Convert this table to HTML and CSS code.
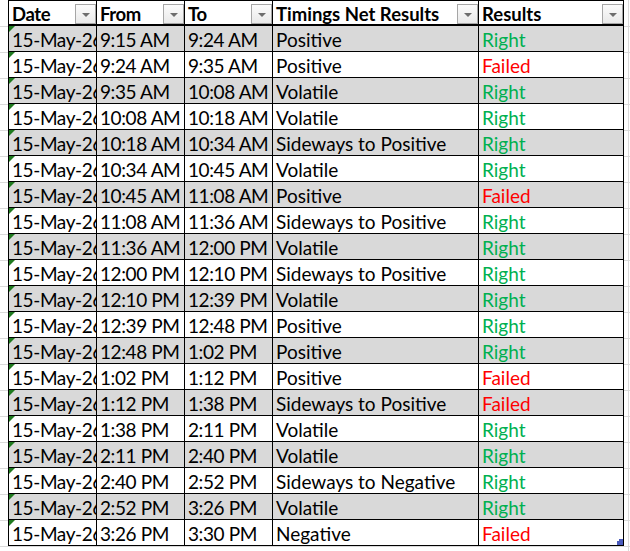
FILE: index.html
```html
<!DOCTYPE html>
<html>
<head>
<meta charset="utf-8">
<link rel="stylesheet" href="styles.css">
</head>
<body>
<div class="sheet">
  <div class="row head">
    <div class="cell"><span class="label">Date</span><span class="filter"></span></div>
    <div class="cell"><span class="label">From</span><span class="filter"></span></div>
    <div class="cell"><span class="label">To</span><span class="filter"></span></div>
    <div class="cell"><span class="label">Timings Net Results</span><span class="filter"></span></div>
    <div class="cell"><span class="label">Results</span><span class="filter"></span></div>
  </div>
  <div class="row alt"><div class="cell date">15-May-26</div><div class="cell">9:15 AM</div><div class="cell">9:24 AM</div><div class="cell">Positive</div><div class="cell right">Right</div></div>
  <div class="row"><div class="cell date">15-May-26</div><div class="cell">9:24 AM</div><div class="cell">9:35 AM</div><div class="cell">Positive</div><div class="cell failed">Failed</div></div>
  <div class="row alt"><div class="cell date">15-May-26</div><div class="cell">9:35 AM</div><div class="cell">10:08 AM</div><div class="cell">Volatile</div><div class="cell right">Right</div></div>
  <div class="row"><div class="cell date">15-May-26</div><div class="cell">10:08 AM</div><div class="cell">10:18 AM</div><div class="cell">Volatile</div><div class="cell right">Right</div></div>
  <div class="row alt"><div class="cell date">15-May-26</div><div class="cell">10:18 AM</div><div class="cell">10:34 AM</div><div class="cell">Sideways to Positive</div><div class="cell right">Right</div></div>
  <div class="row"><div class="cell date">15-May-26</div><div class="cell">10:34 AM</div><div class="cell">10:45 AM</div><div class="cell">Volatile</div><div class="cell right">Right</div></div>
  <div class="row alt"><div class="cell date">15-May-26</div><div class="cell">10:45 AM</div><div class="cell">11:08 AM</div><div class="cell">Positive</div><div class="cell failed">Failed</div></div>
  <div class="row"><div class="cell date">15-May-26</div><div class="cell">11:08 AM</div><div class="cell">11:36 AM</div><div class="cell">Sideways to Positive</div><div class="cell right">Right</div></div>
  <div class="row alt"><div class="cell date">15-May-26</div><div class="cell">11:36 AM</div><div class="cell">12:00 PM</div><div class="cell">Volatile</div><div class="cell right">Right</div></div>
  <div class="row"><div class="cell date">15-May-26</div><div class="cell">12:00 PM</div><div class="cell">12:10 PM</div><div class="cell">Sideways to Positive</div><div class="cell right">Right</div></div>
  <div class="row alt"><div class="cell date">15-May-26</div><div class="cell">12:10 PM</div><div class="cell">12:39 PM</div><div class="cell">Volatile</div><div class="cell right">Right</div></div>
  <div class="row"><div class="cell date">15-May-26</div><div class="cell">12:39 PM</div><div class="cell">12:48 PM</div><div class="cell">Positive</div><div class="cell right">Right</div></div>
  <div class="row alt"><div class="cell date">15-May-26</div><div class="cell">12:48 PM</div><div class="cell">1:02 PM</div><div class="cell">Positive</div><div class="cell right">Right</div></div>
  <div class="row"><div class="cell date">15-May-26</div><div class="cell">1:02 PM</div><div class="cell">1:12 PM</div><div class="cell">Positive</div><div class="cell failed">Failed</div></div>
  <div class="row alt"><div class="cell date">15-May-26</div><div class="cell">1:12 PM</div><div class="cell">1:38 PM</div><div class="cell">Sideways to Positive</div><div class="cell failed">Failed</div></div>
  <div class="row"><div class="cell date">15-May-26</div><div class="cell">1:38 PM</div><div class="cell">2:11 PM</div><div class="cell">Volatile</div><div class="cell right">Right</div></div>
  <div class="row alt"><div class="cell date">15-May-26</div><div class="cell">2:11 PM</div><div class="cell">2:40 PM</div><div class="cell">Volatile</div><div class="cell right">Right</div></div>
  <div class="row"><div class="cell date">15-May-26</div><div class="cell">2:40 PM</div><div class="cell">2:52 PM</div><div class="cell">Sideways to Negative</div><div class="cell right">Right</div></div>
  <div class="row alt"><div class="cell date">15-May-26</div><div class="cell">2:52 PM</div><div class="cell">3:26 PM</div><div class="cell">Volatile</div><div class="cell right">Right</div></div>
  <div class="row"><div class="cell date">15-May-26</div><div class="cell">3:26 PM</div><div class="cell">3:30 PM</div><div class="cell">Negative</div><div class="cell failed last">Failed<svg class="handle" width="6" height="6" viewBox="0 0 6 6"><path d="M2 0H6V6H0V2H2Z" fill="#4a5bbd"/></svg></div></div>
</div>
</body>
</html>
```

FILE: styles.css
```css
html, body {
  margin: 0;
  padding: 0;
}
body {
  width: 630px;
  height: 551px;
  overflow: hidden;
  background-color: #fff;
  background-image:
    linear-gradient(to right, transparent 628px, #d9d9d9 628px, #d9d9d9 629px, transparent 629px),
    repeating-linear-gradient(to bottom, transparent 0, transparent 25px, #dadada 25px, #dadada 26px);
  background-position: 0 0, 0 1px;
  font-family: Lato, "Liberation Sans", sans-serif;
  font-size: 19px;
  color: #000;
}
.sheet {
  margin-left: 8px;
  width: 615px;
  border-left: 1px solid #000;
  border-top: 1px solid #000;
  background: #fff;
}
.row {
  display: grid;
  grid-template-columns: 88px 88px 88px 206px 145px;
  height: 26px;
}
.row.alt {
  background: #d9d9d9;
}
.cell {
  box-sizing: border-box;
  border-right: 1px solid #000;
  border-bottom: 1px solid #000;
  padding-left: 3px;
  padding-top: 2px;
  line-height: 23px;
  white-space: nowrap;
  overflow: hidden;
  position: relative;
}
.row .cell:nth-child(-n+3) {
  letter-spacing: -0.4px;
}
.date {
  padding-left: 3px;
}
.head {
  height: 25px;
}
.head .cell {
  border-bottom-width: 2px;
  padding-top: 0;
  display: flex;
  align-items: flex-end;
  justify-content: space-between;
  font-weight: bold;
  font-size: 18.5px;
  letter-spacing: 0;
}
.label {
  line-height: 20px;
}
.filter {
  flex: none;
  box-sizing: border-box;
  width: 21px;
  height: 20px;
  border: 1px solid #a6a6a6;
  background: linear-gradient(to bottom, #fbfbfb, #e9e9e9);
  position: relative;
}
.filter::after {
  content: "";
  position: absolute;
  left: 6px;
  top: 8px;
  border-left: 4px solid transparent;
  border-right: 4px solid transparent;
  border-top: 4px solid #6d6d6d;
}
.date::before {
  content: "";
  position: absolute;
  left: 0;
  top: 0;
  border-top: 6px solid #1f7a1f;
  border-right: 6px solid transparent;
}
.right {
  color: #00b050;
}
.failed {
  color: #ff0000;
}
.handle {
  position: absolute;
  right: 0;
  bottom: 0;
}
```
